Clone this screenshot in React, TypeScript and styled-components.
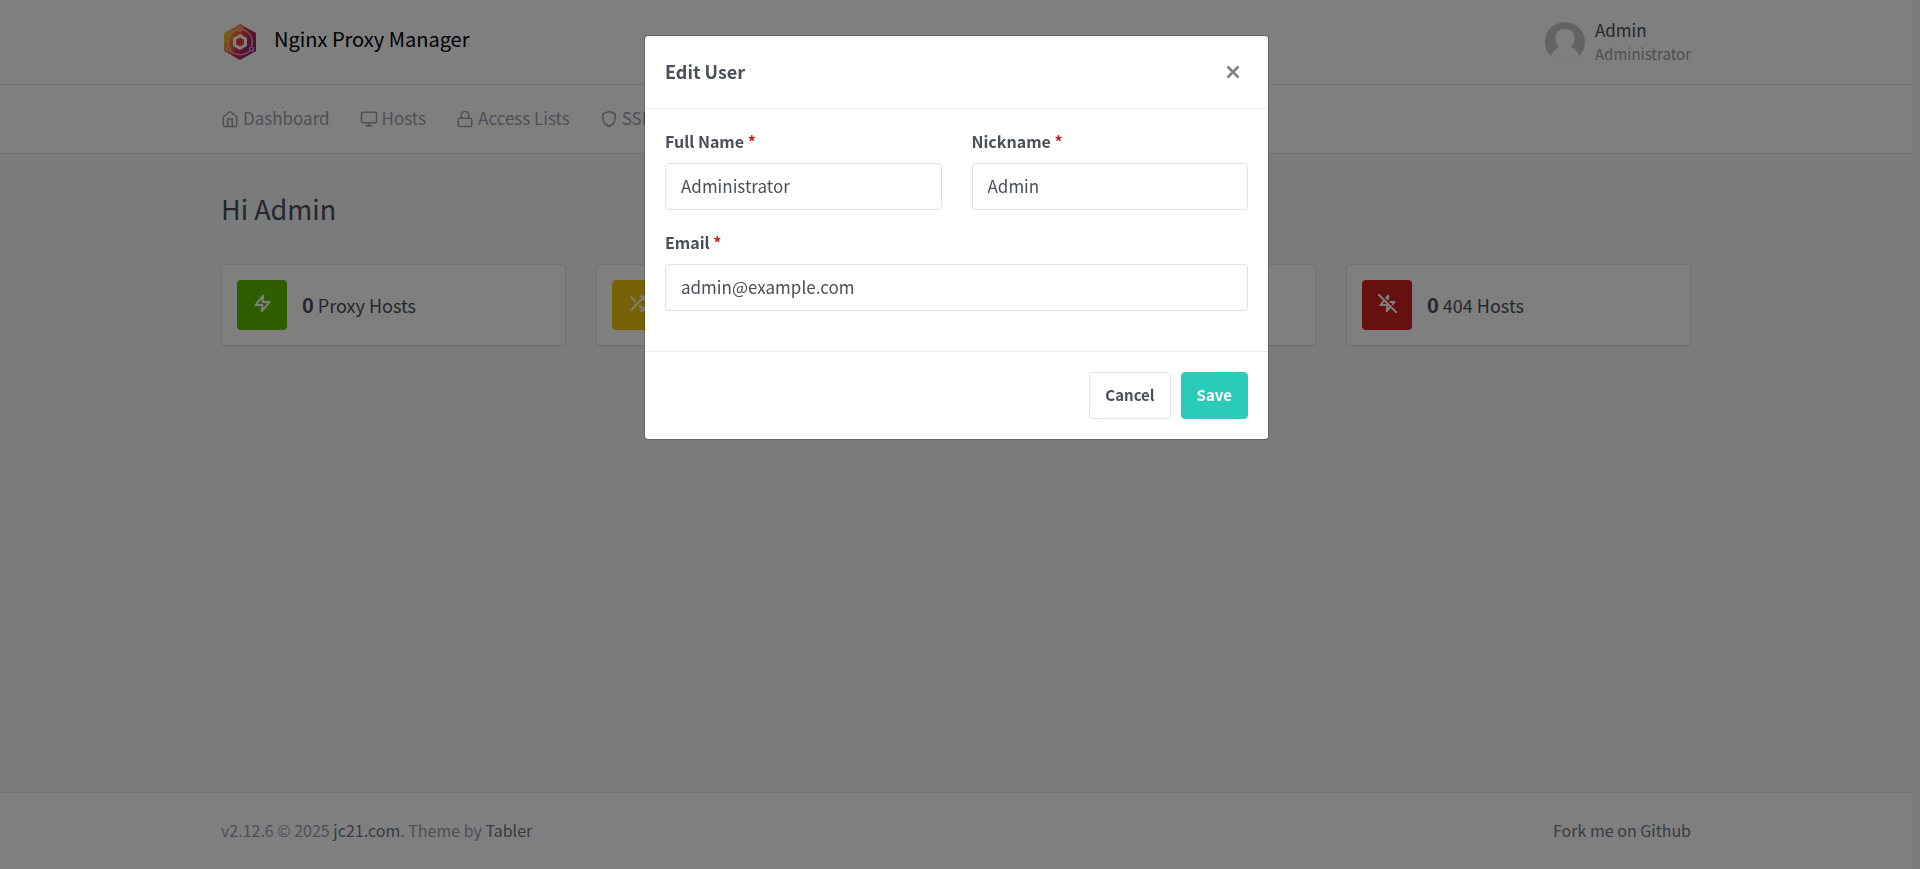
import React from 'react';
import styled, { createGlobalStyle, css } from 'styled-components';
import { FiHome, FiMonitor, FiLock, FiShield, FiZap, FiShuffle, FiRadio, FiZapOff } from 'react-icons/fi';

const Global = createGlobalStyle`
  *, *::before, *::after { box-sizing: border-box; }
  html { background: #f5f7fb; }
  body {
    margin: 0;
    color: #495057;
    font-family: 'Noto Sans CJK SC', 'Noto Sans', sans-serif;
    font-size: 17px;
    line-height: 28px;
  }
  a { color: inherit; text-decoration: none; }
  h1, h2, p { margin: 0; }
  button, input { font: inherit; }
`;

const Page = styled.div`
  display: flex;
  flex-direction: column;
  min-height: 100vh;
  padding-right: 8px;
`;

const Container = styled.div`
  width: 100%;
  max-width: 1500px;
  margin: 0 auto;
  padding: 0 15px;
  display: flex;
  align-items: center;
`;

const Header = styled.header`
  background: #fff;
  border-bottom: 1px solid #e3e4f0;
  display: flex;
  height: 85px;
`;

const Brand = styled.a`
  display: flex;
  align-items: center;
  gap: 15px;
  color: #000;
  font-size: 20px;
  line-height: 32px;
`;

const BrandName = styled.span`
  padding-bottom: 6px;
`;

const Account = styled.a`
  margin-left: auto;
  display: flex;
  align-items: center;
  gap: 10px;
`;

const AccountText = styled.span`
  display: flex;
  flex-direction: column;
  line-height: 24px;
`;

const Role = styled.small`
  color: #9aa0ac;
  font-size: 15px;
`;

const Nav = styled.nav`
  background: #fff;
  border-bottom: 1px solid #e0e2e8;
  display: flex;
  height: 69px;
`;

const NavLink = styled.a`
  display: flex;
  align-items: center;
  gap: 4px;
  margin-right: 30px;
  padding-bottom: 2px;
  color: #9aa0ac;

  svg { position: relative; top: 1px; }
`;

const Main = styled.main`
  flex: 1;
`;

const Title = styled.h1`
  padding: 35px 0;
  font-size: 27px;
  font-weight: 400;
  line-height: 40px;
`;

const Cards = styled.div`
  flex: 1;
  display: grid;
  grid-template-columns: repeat(4, 1fr);
  gap: 30px;
`;

const Card = styled.a`
  display: flex;
  align-items: center;
  gap: 15px;
  padding: 15px;
  background: #fff;
  border: 1px solid #e2e5ec;
  border-radius: 4px;
  box-shadow: 0 1px 2px rgba(0, 0, 0, 0.06);
  font-size: 18px;
`;

const Stamp = styled.span<{ $color: string }>`
  width: 50px;
  height: 50px;
  padding-bottom: 4px;
  border-radius: 4px;
  background: ${(p) => p.$color};
  color: #fff;
  display: flex;
  align-items: center;
  justify-content: center;
`;

const Count = styled.strong`
  font-size: 20px;
`;

const Footer = styled.footer`
  background: #fff;
  border-top: 1px solid #e3e4f0;
  padding-bottom: 2px;
  color: #9aa0ac;
  font-size: 16px;
  display: flex;
  height: 77px;
`;

const FooterLink = styled.a<{ $end?: boolean }>`
  color: #6e7687;
  ${(p) => p.$end && css`margin-left: auto;`}
`;

const Backdrop = styled.div`
  position: fixed;
  inset: 0;
  padding: 35px 7px 35px 0;
  background: rgba(0, 0, 0, 0.5);
  overflow: auto;
`;

const Dialog = styled.form`
  max-width: 625px;
  margin: 0 auto;
  background: #fff;
  background-clip: padding-box;
  border: 1px solid rgba(0, 0, 0, 0.2);
  border-radius: 4px;
`;

const DialogHeader = styled.div`
  display: flex;
  align-items: center;
  justify-content: space-between;
  height: 73px;
  padding: 0 20px;
  border-bottom: 1px solid #e9ecef;
`;

const DialogTitle = styled.h2`
  padding-bottom: 3px;
  font-size: 18px;
  font-weight: 700;
`;

const Close = styled.button`
  width: 30px;
  height: 30px;
  padding: 0;
  border: 0;
  background: none;
  color: #808080;
  display: flex;
  align-items: center;
  justify-content: center;
`;

const Fields = styled.div`
  display: grid;
  grid-template-columns: 1fr 1fr;
  gap: 20px 30px;
  padding: 20px 20px 40px;
`;

const Field = styled.div<{ $wide?: boolean }>`
  display: flex;
  flex-direction: column;
  gap: 9px;
  ${(p) => p.$wide && css`grid-column: 1 / -1;`}
`;

const Label = styled.label`
  font-size: 16px;
  font-weight: 700;
  line-height: 25px;
`;

const Required = styled.span`
  color: #cd201f;
`;

const Input = styled.input`
  width: 100%;
  height: 47px;
  padding: 0 15px 2px;
  border: 1px solid #dee2ec;
  border-radius: 4px;
  background: #fff;
  color: #495057;
`;

const DialogFooter = styled.div`
  display: flex;
  justify-content: flex-end;
  gap: 10px;
  padding: 20px;
  border-top: 1px solid #e9ecef;
`;

const Button = styled.button<{ $primary?: boolean }>`
  height: 47px;
  padding: 0 15px 2px;
  border: 1px solid ${(p) => (p.$primary ? '#2bcbba' : '#dee2ec')};
  border-radius: 4px;
  background: ${(p) => (p.$primary ? '#2bcbba' : '#fff')};
  color: ${(p) => (p.$primary ? '#fff' : '#495057')};
  font-size: 15px;
  font-weight: 700;
`;

const Logo = () => (
  <svg width="38" height="38" viewBox="0 0 38 38" aria-hidden="true">
    <defs>
      <linearGradient id="logo" x1="0" y1="0.15" x2="1" y2="0.8">
        <stop offset="0" stopColor="#f2e72e" />
        <stop offset="0.35" stopColor="#f0702c" />
        <stop offset="0.6" stopColor="#c9214f" />
        <stop offset="1" stopColor="#6d2a9c" />
      </linearGradient>
    </defs>
    <path d="M19 1 L35 10 V28 L19 37 L3 28 V10 Z" fill="url(#logo)" />
    <g fill="none" stroke="#f0b9c6" strokeWidth="1.2">
      <path d="M16.5 6.5 C10.5 8 6.5 13 6.8 19 C6.8 20.8 7 22.2 7.5 23.5 M21.5 6.5 C27.5 8 31.5 13 31.2 19 C31.2 20.8 31 22.2 30.5 23.5 M9.5 27.8 C14.5 33 23.5 33 28.5 27.8" />
      <circle cx="19" cy="5.800" r="2" />
      <circle cx="7.500" cy="26" r="2" />
      <circle cx="30.500" cy="26" r="2" />
    </g>
    <path d="M19 11 L26 15 V23 L19 27 L12 23 V15 Z" fill="#fff" />
    <path d="M19 14.5 L22.9 16.75 V21.25 L19 23.5 L15.1 21.25 V16.75 Z" fill="#ee3b3b" />
  </svg>
);

const Avatar = () => (
  <svg width="40" height="40" viewBox="0 0 40 40" aria-hidden="true">
    <defs>
      <clipPath id="disc"><circle cx="20" cy="20" r="20" /></clipPath>
    </defs>
    <g clipPath="url(#disc)">
      <rect width="40" height="40" fill="#c6c6c6" />
      <path d="M20 7 C26 7 29.5 11 29.5 16.5 C29.5 20.5 28 23 25.500 25 C30 26.500 33.500 30.500 35 36 V40 H5 V36 C6.500 30.500 10 26.500 14.500 25 C12 23 10.500 20.500 10.500 16.500 C10.500 11 14 7 20 7 Z" fill="#fff" />
    </g>
  </svg>
);

const nav = [
  { icon: FiHome, text: 'Dashboard' },
  { icon: FiMonitor, text: 'Hosts' },
  { icon: FiLock, text: 'Access Lists' },
  { icon: FiShield, text: 'SSL Certificates' },
];

const stats = [
  { icon: FiZap, color: '#5eba00', text: 'Proxy Hosts' },
  { icon: FiShuffle, color: '#f1c40f', text: 'Redirection Hosts' },
  { icon: FiRadio, color: '#467fcf', text: 'Streams' },
  { icon: FiZapOff, color: '#cd201f', text: '404 Hosts' },
];

type FieldProps = { id: string; label: string; value: string; type?: string; wide?: boolean };

const TextField = ({ id, label, value, type = 'text', wide }: FieldProps) => (
  <Field $wide={wide}>
    <Label htmlFor={id}>{label} <Required>*</Required></Label>
    <Input id={id} type={type} defaultValue={value} required />
  </Field>
);

export default function App() {
  return (
    <>
      <Global />
      <Page>
        <Header>
          <Container>
            <Brand href="#"><Logo /><BrandName>Nginx Proxy Manager</BrandName></Brand>
            <Account href="#">
              <Avatar />
              <AccountText>Admin<Role>Administrator</Role></AccountText>
            </Account>
          </Container>
        </Header>
        <Nav>
          <Container>
            {nav.map(({ icon: Icon, text }) => (
              <NavLink href="#" key={text}><Icon size={18} />{text}</NavLink>
            ))}
          </Container>
        </Nav>
        <Main>
          <Container><Title>Hi Admin</Title></Container>
          <Container>
            <Cards>
              {stats.map(({ icon: Icon, color, text }) => (
                <Card href="#" key={text}>
                  <Stamp $color={color}><Icon size={19} strokeWidth={2.5} /></Stamp>
                  <span><Count>0</Count> {text}</span>
                </Card>
              ))}
            </Cards>
          </Container>
        </Main>
        <Footer>
          <Container>
            <p>v2.12.6 © 2025 <FooterLink href="#">jc21.com</FooterLink>. Theme by <FooterLink href="#">Tabler</FooterLink></p>
            <FooterLink href="#" $end>Fork me on Github</FooterLink>
          </Container>
        </Footer>
      </Page>
      <Backdrop>
        <Dialog role="dialog" aria-labelledby="dialog-title" onSubmit={(e) => e.preventDefault()}>
          <DialogHeader>
            <DialogTitle id="dialog-title">Edit User</DialogTitle>
            <Close type="button" aria-label="Close">
              <svg width="14" height="14" viewBox="0 0 14 14" stroke="currentColor" strokeWidth="2.500">
                <path d="M1.500 1.500 L12.500 12.500 M12.500 1.500 L1.500 12.500" />
              </svg>
            </Close>
          </DialogHeader>
          <Fields>
            <TextField id="name" label="Full Name" value="Administrator" />
            <TextField id="nickname" label="Nickname" value="Admin" />
            <TextField id="email" label="Email" type="email" value="admin@example.com" wide />
          </Fields>
          <DialogFooter>
            <Button type="button">Cancel</Button>
            <Button type="submit" $primary>Save</Button>
          </DialogFooter>
        </Dialog>
      </Backdrop>
    </>
  );
}
